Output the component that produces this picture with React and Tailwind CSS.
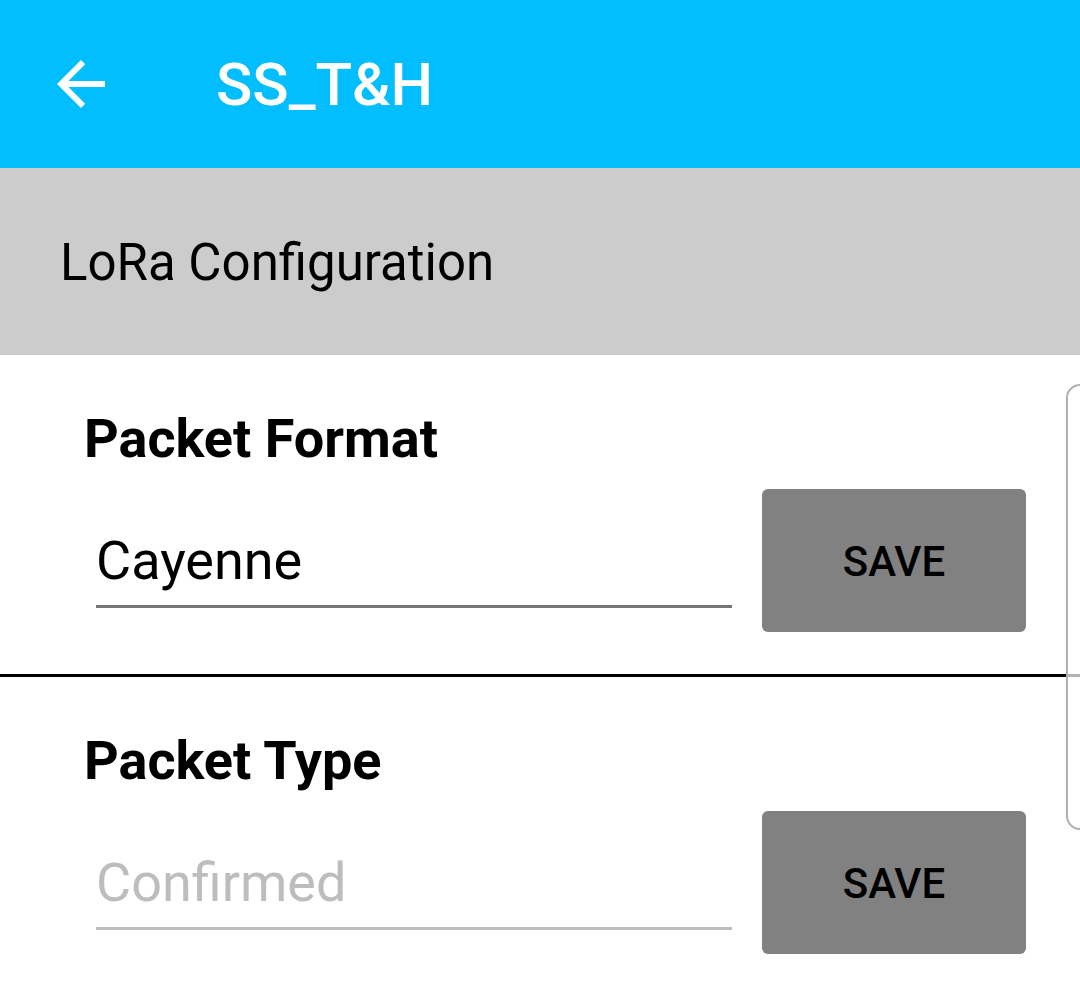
import React from "react";

function Section({ title, value, disabled, last }) {
  return (
    <div className={`pt-[57px] ${last ? "pb-[43px]" : "pb-[42px] border-b-[3px] border-black"}`}>
      <div className="pl-[84px] text-[54px] leading-[54px] font-bold text-black">{title}</div>
      <div className="mt-[23px] flex items-start">
        <div className="ml-[96px] w-[636px] mt-[45px]">
          <div
            className={`text-[54px] leading-[54px] ${disabled ? "text-[#bdbdbd]" : "text-black"}`}
          >
            {value}
          </div>
          <div className={`mt-[17px] h-[3px] ${disabled ? "bg-[#bdbdbd]" : "bg-[#757575]"}`} />
        </div>
        <div className="ml-[30px] w-[264px] h-[143px] rounded-[6px] bg-[#818181] flex items-center justify-center pt-[3px]">
          <span className="text-[42px] leading-none font-medium text-black">SAVE</span>
        </div>
      </div>
    </div>
  );
}

export default function App() {
  return (
    <div
      className="relative w-[1080px] h-[996px] overflow-hidden bg-white"
      style={{ fontFamily: "Roboto, 'Noto Sans', sans-serif" }}
    >
      <div className="h-[168px] bg-[#03befe] flex items-center pl-[45px]">
        <svg width="72" height="72" viewBox="0 0 24 24" fill="white">
          <path d="M20 11H7.83l5.59-5.59L12 4l-8 8 8 8 1.41-1.41L7.83 13H20v-2z" />
        </svg>
        <div className="ml-[99px] pt-[2px] text-white text-[60px] leading-none font-medium">SS_T&amp;H</div>
      </div>
      <div className="h-[187px] bg-[#cccccc] flex items-center pl-[60px]">
        <span className="text-[51px] leading-none text-black pt-[2px]">LoRa Configuration</span>
      </div>
      <Section title="Packet Format" value="Cayenne" />
      <Section title="Packet Type" value="Confirmed" disabled last />
      <div className="absolute left-[1066px] top-[384px] w-[40px] h-[446px] border-2 border-[#b0b0b0] rounded-[14px] bg-white/70" />
    </div>
  );
}
